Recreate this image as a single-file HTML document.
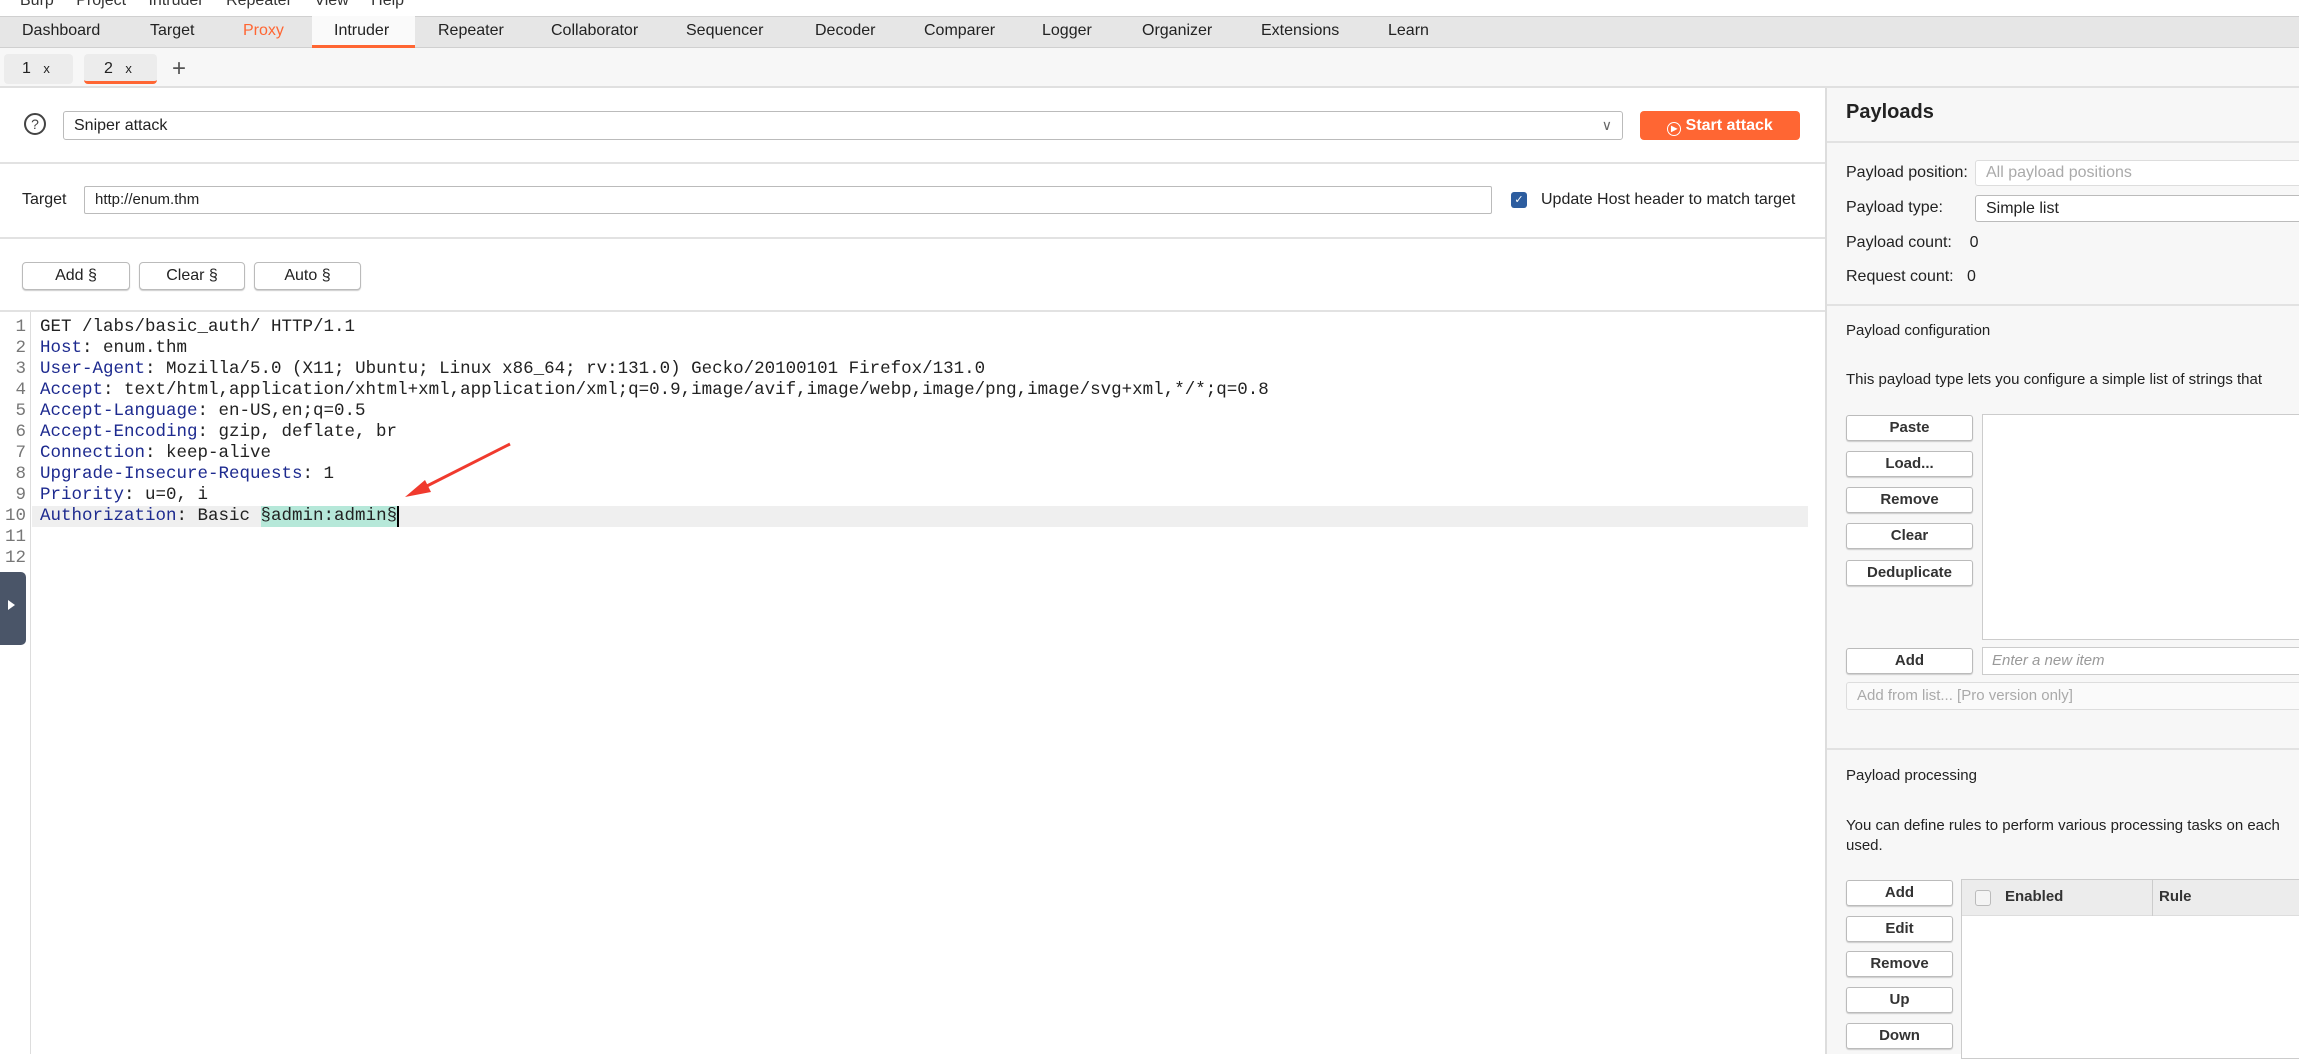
<!DOCTYPE html>
<html><head><meta charset="utf-8"><style>
*{box-sizing:border-box;margin:0;padding:0}
body{width:2299px;height:1054px;overflow:hidden;background:#fff;font-family:"Liberation Sans",Arial,sans-serif;font-size:16px;color:#222;position:relative}
.a{position:absolute;white-space:nowrap}
.tab{position:absolute;top:16px;height:32px;line-height:30px;font-size:16px;color:#222}
.btn{position:absolute;border:1px solid #bbb;border-radius:4px;background:#fff;text-align:center;font-size:16px;box-shadow:0 1px 1px #ccc}
.rb{position:absolute;border:1px solid #bbb;border-radius:3px;background:#fff;text-align:center;font-size:15px;font-weight:bold;color:#333;box-shadow:0 1px 1px #ccc}
.hr{position:absolute;height:2px;background:#e2e2e2}
.code{position:absolute;left:40px;font-family:"Liberation Mono",monospace;font-size:17.5px;line-height:21px;color:#222}
.ln{position:absolute;left:0;width:26px;text-align:right;font-family:"Liberation Mono",monospace;font-size:17.5px;color:#777;line-height:21px}
.h{color:#1d2a8f}
</style></head><body>
<div class="a" style="top:-8px;left:20px;font-size:16px;color:#333;word-spacing:18px">Burp Project Intruder Repeater View Help</div>
<div class="a" style="top:16px;left:0;width:2299px;height:32px;background:#e6e6e6;border-top:1px solid #d0d0d0;border-bottom:1px solid #d0d0d0"></div>
<div class="a" style="top:16px;left:312px;width:103px;height:32px;background:#fafafa;border-bottom:3px solid #ff6633"></div>
<div class="tab" style="left:22px">Dashboard</div>
<div class="tab" style="left:150px">Target</div>
<div class="tab" style="left:243px;color:#ff6633">Proxy</div>
<div class="tab" style="left:334px">Intruder</div>
<div class="tab" style="left:438px">Repeater</div>
<div class="tab" style="left:551px">Collaborator</div>
<div class="tab" style="left:686px">Sequencer</div>
<div class="tab" style="left:815px">Decoder</div>
<div class="tab" style="left:924px">Comparer</div>
<div class="tab" style="left:1042px">Logger</div>
<div class="tab" style="left:1142px">Organizer</div>
<div class="tab" style="left:1261px">Extensions</div>
<div class="tab" style="left:1388px">Learn</div>
<div class="a" style="top:48px;left:0;width:2299px;height:40px;background:#f7f7f7;border-bottom:2px solid #e0e0e0"></div>
<div class="a" style="top:54px;left:4px;width:69px;height:30px;background:#ececec;border-radius:4px;line-height:30px;padding-left:18px;font-size:16px">1 <span style="font-size:13px;margin-left:8px">x</span></div>
<div class="a" style="top:54px;left:84px;width:73px;height:30px;background:#ececec;border-radius:4px;line-height:30px;padding-left:20px;font-size:16px;border-bottom:3px solid #ff6633">2 <span style="font-size:13px;margin-left:8px">x</span></div>
<div class="a" style="top:54px;left:172px;font-size:24px;line-height:30px;color:#555">+</div>
<!-- left panel -->
<div class="a" style="top:113px;left:24px;width:22px;height:22px;border:2px solid #444;border-radius:50%;text-align:center;font-size:14px;line-height:18px;color:#444">?</div>
<div class="a" style="top:111px;left:63px;width:1560px;height:29px;border:1px solid #bbb;border-radius:3px;line-height:27px;padding-left:10px;font-size:16px">Sniper attack<span style="position:absolute;right:10px;color:#666;font-size:14px">&#8744;</span></div>
<div class="a" style="top:111px;left:1640px;width:160px;height:29px;background:#ff6633;border-radius:4px;color:#fff;font-weight:bold;font-size:16px;line-height:29px;text-align:center"><span style="display:inline-block;width:14px;height:14px;border:1.5px solid #fff;border-radius:50%;font-size:8px;line-height:11px;vertical-align:-1px">&#9654;</span> Start attack</div>
<div class="hr" style="top:162px;left:0;width:1825px"></div>
<div class="a" style="top:191px;left:22px;font-size:16px">Target</div>
<div class="a" style="top:186px;left:84px;width:1408px;height:28px;border:1px solid #bbb;border-radius:2px;line-height:26px;padding-left:10px;font-size:15px">http://enum.thm</div>
<div class="a" style="top:192px;left:1511px;width:16px;height:16px;background:#2d5d9f;border-radius:3px;color:#fff;font-size:11px;text-align:center;line-height:16px">&#10003;</div>
<div class="a" style="top:191px;left:1541px;font-size:16px">Update Host header to match target</div>
<div class="hr" style="top:237px;left:0;width:1825px"></div>
<div class="btn" style="top:262px;left:22px;width:108px;height:28px;line-height:26px">Add §</div>
<div class="btn" style="top:262px;left:139px;width:106px;height:28px;line-height:26px">Clear §</div>
<div class="btn" style="top:262px;left:254px;width:107px;height:28px;line-height:26px">Auto §</div>
<div class="hr" style="top:310px;left:0;width:1825px"></div>
<div class="a" style="top:312px;left:30px;width:1px;height:742px;background:#ddd"></div>
<div class="a" style="top:506px;left:32px;width:1776px;height:21px;background:#efefef"></div>
<div class="ln" style="top:317px">1</div><div class="ln" style="top:338px">2</div><div class="ln" style="top:359px">3</div><div class="ln" style="top:380px">4</div><div class="ln" style="top:401px">5</div><div class="ln" style="top:422px">6</div><div class="ln" style="top:443px">7</div><div class="ln" style="top:464px">8</div><div class="ln" style="top:485px">9</div><div class="ln" style="top:506px">10</div><div class="ln" style="top:527px">11</div><div class="ln" style="top:548px">12</div>
<div class="code" style="top:317px;white-space:pre">GET /labs/basic_auth/ HTTP/1.1
<span class="h">Host</span>: enum.thm
<span class="h">User-Agent</span>: Mozilla/5.0 (X11; Ubuntu; Linux x86_64; rv:131.0) Gecko/20100101 Firefox/131.0
<span class="h">Accept</span>: text/html,application/xhtml+xml,application/xml;q=0.9,image/avif,image/webp,image/png,image/svg+xml,*/*;q=0.8
<span class="h">Accept-Language</span>: en-US,en;q=0.5
<span class="h">Accept-Encoding</span>: gzip, deflate, br
<span class="h">Connection</span>: keep-alive
<span class="h">Upgrade-Insecure-Requests</span>: 1
<span class="h">Priority</span>: u=0, i
<span class="h">Authorization</span>: Basic <span style="background:#b6e8d9;display:inline-block;height:21px">§admin:admin§</span><span style="display:inline-block;width:2px;height:21px;background:#000;vertical-align:top"></span></div>
<svg class="a" style="top:430px;left:395px" width="130" height="80"><line x1="115" y1="14" x2="24" y2="60" stroke="#f03a2e" stroke-width="3"/><polygon points="10,67 30,50 36,62" fill="#f03a2e"/></svg>
<div class="a" style="top:572px;left:0;width:26px;height:73px;background:#4a5568;border-radius:0 5px 5px 0"></div>
<div class="a" style="top:600px;left:8px;width:0;height:0;border-left:7px solid #fff;border-top:5px solid transparent;border-bottom:5px solid transparent"></div>
<!-- right panel -->
<div class="a" style="top:88px;left:1825px;width:474px;height:966px;background:#f7f7f7;border-left:2px solid #ddd"></div>
<div class="a" style="top:101px;left:1846px;font-size:20px;font-weight:bold;color:#222">Payloads</div>
<div class="hr" style="top:141px;left:1827px;width:472px"></div>
<div class="a" style="top:164px;left:1846px;font-size:16px">Payload position:</div>
<div class="a" style="top:160px;left:1975px;width:330px;height:26px;border:1px solid #ddd;background:#fff;border-radius:3px;line-height:24px;padding-left:10px;color:#aaa;font-size:16px">All payload positions</div>
<div class="a" style="top:199px;left:1846px;font-size:16px">Payload type:</div>
<div class="a" style="top:195px;left:1975px;width:330px;height:27px;border:1px solid #bbb;background:#fff;border-radius:3px;line-height:25px;padding-left:10px;font-size:16px">Simple list</div>
<div class="a" style="top:234px;left:1846px;font-size:16px">Payload count:&nbsp;&nbsp;&nbsp; 0</div>
<div class="a" style="top:268px;left:1846px;font-size:16px">Request count:&nbsp;&nbsp; 0</div>
<div class="hr" style="top:304px;left:1827px;width:472px"></div>
<div class="a" style="top:322px;left:1846px;font-size:15px;color:#222">Payload configuration</div>
<div class="a" style="top:371px;left:1846px;font-size:15px;color:#222">This payload type lets you configure a simple list of strings that</div>
<div class="rb" style="top:415px;left:1846px;width:127px;height:26px;line-height:24px">Paste</div>
<div class="rb" style="top:451px;left:1846px;width:127px;height:26px;line-height:24px">Load...</div>
<div class="rb" style="top:487px;left:1846px;width:127px;height:26px;line-height:24px">Remove</div>
<div class="rb" style="top:523px;left:1846px;width:127px;height:26px;line-height:24px">Clear</div>
<div class="rb" style="top:560px;left:1846px;width:127px;height:26px;line-height:24px">Deduplicate</div>
<div class="a" style="top:414px;left:1982px;width:330px;height:226px;border:1px solid #ccc;background:#fff"></div>
<div class="rb" style="top:648px;left:1846px;width:127px;height:26px;line-height:24px">Add</div>
<div class="a" style="top:647px;left:1982px;width:330px;height:28px;border:1px solid #ccc;background:#fff;line-height:26px;padding-left:9px;font-style:italic;color:#999;font-size:15px">Enter a new item</div>
<div class="a" style="top:682px;left:1846px;width:460px;height:28px;border:1px solid #ddd;background:#fafafa;border-radius:3px;line-height:26px;padding-left:10px;color:#aaa;font-size:15px">Add from list... [Pro version only]</div>
<div class="hr" style="top:748px;left:1827px;width:472px"></div>
<div class="a" style="top:767px;left:1846px;font-size:15px">Payload processing</div>
<div class="a" style="top:816px;left:1846px;font-size:15px;line-height:20px;white-space:normal;width:480px">You can define rules to perform various processing tasks on each<br>used.</div>
<div class="rb" style="top:880px;left:1846px;width:107px;height:26px;line-height:24px">Add</div>
<div class="rb" style="top:916px;left:1846px;width:107px;height:26px;line-height:24px">Edit</div>
<div class="rb" style="top:951px;left:1846px;width:107px;height:26px;line-height:24px">Remove</div>
<div class="rb" style="top:987px;left:1846px;width:107px;height:26px;line-height:24px">Up</div>
<div class="rb" style="top:1023px;left:1846px;width:107px;height:26px;line-height:24px">Down</div>
<div class="a" style="top:879px;left:1961px;width:340px;height:180px;border:1px solid #ccc;background:#fff"></div>
<div class="a" style="top:880px;left:1962px;width:340px;height:36px;background:#ececec;border-bottom:1px solid #ddd"></div>
<div class="a" style="top:890px;left:1975px;width:16px;height:16px;border:1px solid #bbb;border-radius:3px;background:#f4f4f4"></div>
<div class="a" style="top:888px;left:2005px;font-size:15px;font-weight:bold;color:#333">Enabled</div>
<div class="a" style="top:880px;left:2152px;width:1px;height:36px;background:#ccc"></div>
<div class="a" style="top:888px;left:2159px;font-size:15px;font-weight:bold;color:#333">Rule</div>
</body></html>
